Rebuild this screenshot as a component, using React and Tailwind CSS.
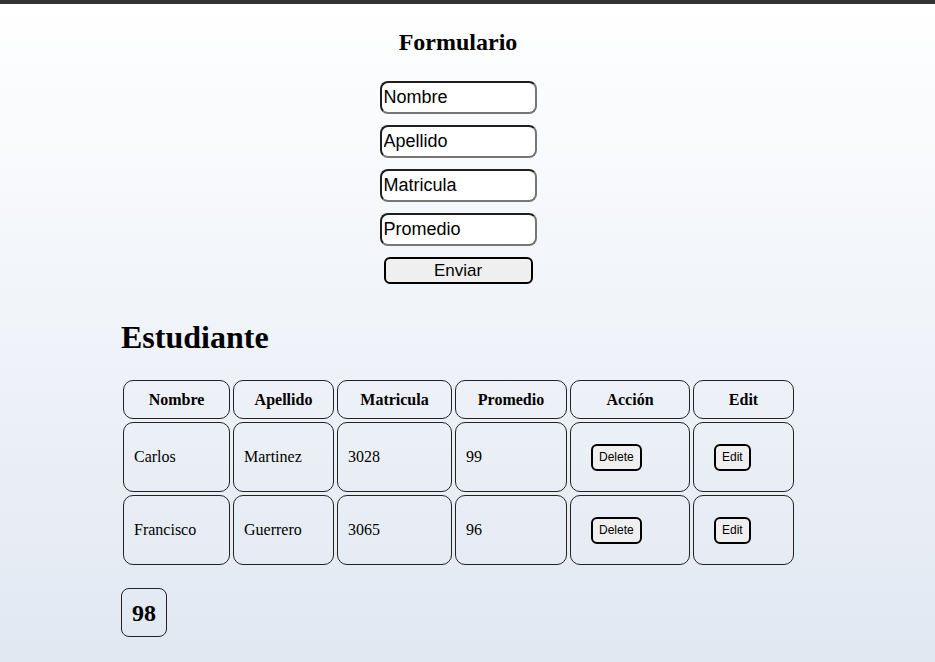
const campos = ['Nombre', 'Apellido', 'Matricula', 'Promedio']

const columnas = [
    { label: 'Nombre', w: 'w-[107px]' },
    { label: 'Apellido', w: 'w-[101px]' },
    { label: 'Matricula', w: 'w-[115px]' },
    { label: 'Promedio', w: 'w-[112px]' },
    { label: 'Acción', w: 'w-[120px]' },
    { label: 'Edit', w: 'w-[101px]' },
]

const estudiantes = [
    { nombre: 'Carlos', apellido: 'Martinez', matricula: '3028', promedio: '99' },
    { nombre: 'Francisco', apellido: 'Guerrero', matricula: '3065', promedio: '96' },
]

export default function App() {
    return (
        <div className="min-h-[662px] bg-linear-to-b from-white to-[#e1e8f2] font-['Liberation_Serif',serif] text-black">
            {/* Top bar */}
            <div className="h-[4px] bg-[#333333]" />

            {/* Formulario */}
            <div className="w-[916px] flex flex-col items-center pt-[25px]">
                <h2 className="text-[24px] leading-[26px] font-bold">Formulario</h2>
                <form className="flex flex-col items-center mt-[26px] gap-[11px]" onSubmit={(e) => e.preventDefault()}>
                    {campos.map((campo) => (
                        <input
                            key={campo}
                            defaultValue={campo}
                            className="w-[157px] h-[33px] rounded-[8px] border-2 border-t-[#1f1f1f] border-l-[#1f1f1f] border-r-[#767676] border-b-[#767676] bg-white px-[2px] font-['Liberation_Sans',sans-serif] text-[18px] text-black outline-none"
                        />
                    ))}
                    <button
                        type="submit"
                        className="w-[149px] h-[27px] rounded-[6px] border-2 border-black bg-[#efefef] font-['Liberation_Sans',sans-serif] text-[17px] leading-[20px]"
                    >
                        Enviar
                    </button>
                </form>
            </div>

            {/* Estudiante */}
            <div className="pl-[121px] pt-[35px]">
                <h1 className="text-[32px] leading-[37px] font-bold">Estudiante</h1>

                <table className="mt-[21px] -ml-[1px] border-separate border-spacing-[3px] text-[16px]">
                    <thead>
                        <tr>
                            {columnas.map(({ label, w }) => (
                                <th key={label} className={`${w} h-[39px] border border-[#222] rounded-[10px] font-bold text-center`}>
                                    {label}
                                </th>
                            ))}
                        </tr>
                    </thead>
                    <tbody>
                        {estudiantes.map((e) => (
                            <tr key={e.matricula}>
                                <td className="h-[70px] border border-[#222] rounded-[10px] pl-[10px]">{e.nombre}</td>
                                <td className="h-[70px] border border-[#222] rounded-[10px] pl-[10px]">{e.apellido}</td>
                                <td className="h-[70px] border border-[#222] rounded-[10px] pl-[10px]">{e.matricula}</td>
                                <td className="h-[70px] border border-[#222] rounded-[10px] pl-[10px]">{e.promedio}</td>
                                <td className="h-[70px] border border-[#222] rounded-[10px] pl-[20px]">
                                    <button className="h-[27px] px-[6px] rounded-[6px] border-2 border-black bg-[#efefef] font-['Liberation_Sans',sans-serif] text-[12px]">
                                        Delete
                                    </button>
                                </td>
                                <td className="h-[70px] border border-[#222] rounded-[10px] pl-[20px]">
                                    <button className="h-[27px] px-[6px] rounded-[6px] border-2 border-black bg-[#efefef] font-['Liberation_Sans',sans-serif] text-[12px]">
                                        Edit
                                    </button>
                                </td>
                            </tr>
                        ))}
                    </tbody>
                </table>

                <div className="mt-[20px] w-[46px] h-[49px] border border-[#222] rounded-[8px] flex items-center justify-center text-[24px] font-bold">
                    98
                </div>
            </div>
        </div>
    )
}
